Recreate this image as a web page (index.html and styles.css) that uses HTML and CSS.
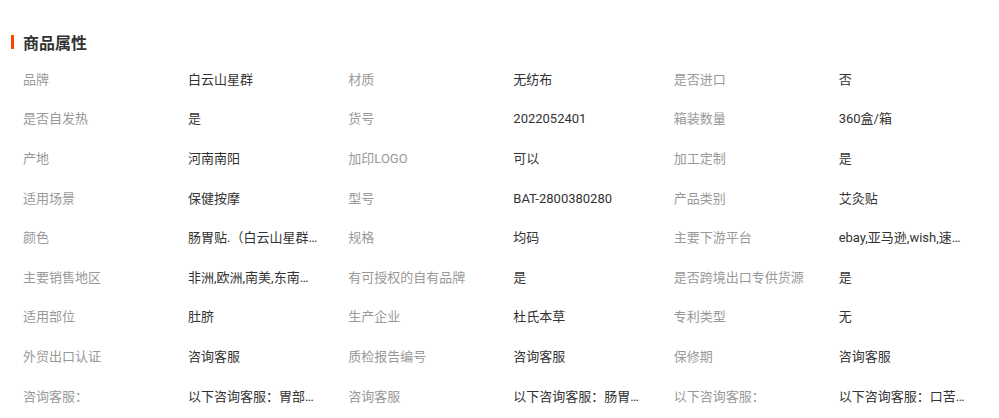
FILE: index.html
```html
<!DOCTYPE html>
<html lang="zh-CN">
<head>
<meta charset="utf-8">
<title>商品属性</title>
<link rel="stylesheet" href="styles.css">
</head>
<body>
<section class="attrs">
  <h2 class="title"><span class="bar"></span>商品属性</h2>
  <div class="grid">
    <div class="item"><span class="label">品牌</span><span class="value">白云山星群</span></div>
    <div class="item"><span class="label">材质</span><span class="value">无纺布</span></div>
    <div class="item"><span class="label">是否进口</span><span class="value">否</span></div>

    <div class="item"><span class="label">是否自发热</span><span class="value">是</span></div>
    <div class="item"><span class="label">货号</span><span class="value">2022052401</span></div>
    <div class="item"><span class="label">箱装数量</span><span class="value">360盒/箱</span></div>

    <div class="item"><span class="label">产地</span><span class="value">河南南阳</span></div>
    <div class="item"><span class="label">加印LOGO</span><span class="value">可以</span></div>
    <div class="item"><span class="label">加工定制</span><span class="value">是</span></div>

    <div class="item"><span class="label">适用场景</span><span class="value">保健按摩</span></div>
    <div class="item"><span class="label">型号</span><span class="value">BAT-2800380280</span></div>
    <div class="item"><span class="label">产品类别</span><span class="value">艾灸贴</span></div>

    <div class="item"><span class="label">颜色</span><span class="value">肠胃贴.（白云山星群艾灸贴）</span></div>
    <div class="item"><span class="label">规格</span><span class="value">均码</span></div>
    <div class="item"><span class="label">主要下游平台</span><span class="value">ebay,亚马逊,wish,速卖通</span></div>

    <div class="item"><span class="label">主要销售地区</span><span class="value">非洲,欧洲,南美,东南亚,北美</span></div>
    <div class="item"><span class="label">有可授权的自有品牌</span><span class="value">是</span></div>
    <div class="item"><span class="label">是否跨境出口专供货源</span><span class="value">是</span></div>

    <div class="item"><span class="label">适用部位</span><span class="value">肚脐</span></div>
    <div class="item"><span class="label">生产企业</span><span class="value">杜氏本草</span></div>
    <div class="item"><span class="label">专利类型</span><span class="value">无</span></div>

    <div class="item"><span class="label">外贸出口认证</span><span class="value">咨询客服</span></div>
    <div class="item"><span class="label">质检报告编号</span><span class="value">咨询客服</span></div>
    <div class="item"><span class="label">保修期</span><span class="value">咨询客服</span></div>

    <div class="item"><span class="label">咨询客服：</span><span class="value">以下咨询客服：胃部调理艾灸贴</span></div>
    <div class="item"><span class="label">咨询客服</span><span class="value">以下咨询客服：肠胃艾灸贴</span></div>
    <div class="item"><span class="label">以下咨询客服：</span><span class="value">以下咨询客服：口苦口臭贴</span></div>
  </div>
</section>
</body>
</html>
```

FILE: styles.css
```css
html, body {
  margin: 0;
  padding: 0;
  background: #ffffff;
}

body {
  font-family: Roboto, "Noto Sans CJK SC", sans-serif;
  font-size: 13px;
  color: #333333;
}

.attrs {
  padding-top: 30px;
}

.title {
  margin: 0 0 5px 11px;
  height: 24px;
  display: flex;
  align-items: center;
  gap: 9px;
  font-family: "Noto Sans CJK SC", sans-serif;
  font-size: 16px;
  font-weight: bold;
  line-height: 24px;
  color: #333333;
}

.bar {
  display: block;
  width: 3px;
  height: 14px;
  background: #ff4400;
}

.grid {
  display: grid;
  grid-template-columns: repeat(3, 1fr);
  grid-auto-rows: 39.6px;
  padding-left: 23px;
  padding-top: 1px;
}

.item {
  display: flex;
  align-items: center;
  white-space: nowrap;
  line-height: 20px;
  min-width: 0;
}

.label {
  width: 165px;
  flex: none;
  color: #999999;
}

.value {
  width: 132px;
  overflow: hidden;
  text-overflow: ellipsis;
  color: #333333;
}
```
